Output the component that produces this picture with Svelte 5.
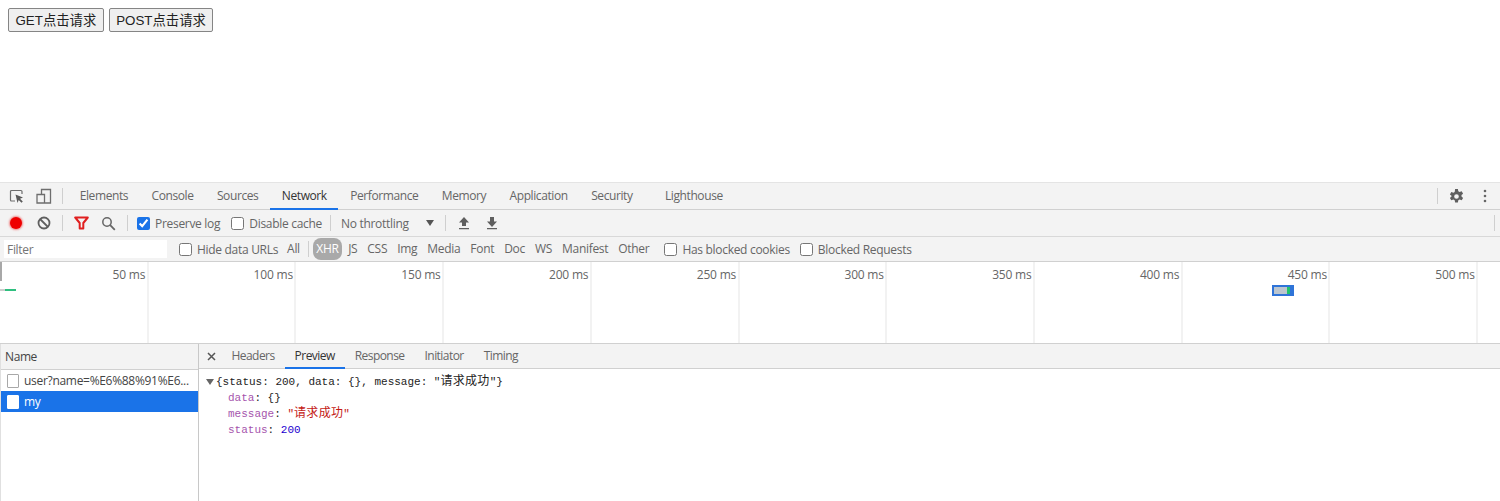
<script lang="ts">
	const tabs = ['Elements', 'Console', 'Sources', 'Network', 'Performance', 'Memory', 'Application', 'Security', 'Lighthouse'];
	const types = ['XHR', 'JS', 'CSS', 'Img', 'Media', 'Font', 'Doc', 'WS', 'Manifest', 'Other'];
	const ticks = [50, 100, 150, 200, 250, 300, 350, 400, 450, 500];
	const detailTabs = ['Headers', 'Preview', 'Response', 'Initiator', 'Timing'];

	let preserveLog = $state(true);
	let selected = $state('my');
</script>

<div class="page">
	<button class="page-btn">GET点击请求</button>
	<button class="page-btn">POST点击请求</button>
</div>

<div class="devtools">
	<div class="tabbar">
		<div class="tool-icons">
			<svg width="16" height="16" viewBox="0 0 16 16" fill="none">
				<path d="M6 13H2.500A1 1 0 0 1 1.500 12V3.500a1 1 0 0 1 1-1H12a1 1 0 0 1 1 1V6" stroke="#6e6e6e" stroke-width="1.200"/>
				<path d="M6.500 6.500l7.500 3-3 1.200 2.800 2.800-1.300 1.300-2.800-2.800-1.200 3z" fill="#5a5a5a"/>
			</svg>
			<svg width="16" height="16" viewBox="0 0 16 16" fill="none">
				<path d="M5.500 6V1.500h9v13.500H8.500M1 6.500h7.500V15H1z" stroke="#6e6e6e" stroke-width="1.300"/>
			</svg>
		</div>
		<span class="vsep tab-sep"></span>
		<div class="tabs">
			{#each tabs as tab}
				<span class="tab" class:active={tab === 'Network'} class:last={tab === 'Lighthouse'}>{tab}</span>
			{/each}
		</div>
		<div class="tab-right">
			<span class="vsep"></span>
			<svg class="gear" width="17" height="17" viewBox="0 0 16 16">
				<path fill-rule="evenodd" fill="#5f5f5f" d="M6.700 1h2.600l.4 2 1.200.7 2-.7 1.300 2.300-1.500 1.300v1.400l1.500 1.300-1.300 2.300-2-.7-1.200.7-.4 2H6.700l-.4-2-1.200-.7-2 .7-1.300-2.300 1.500-1.300V7.300L1.800 6 3.100 3.700l2 .7 1.200-.7zM8 5.800a2.200 2.200 0 1 0 0 4.400 2.200 2.200 0 0 0 0-4.400z"/>
			</svg>
			<svg class="dots" width="4" height="14" viewBox="0 0 4 14">
				<circle cx="2" cy="2" r="1.300" fill="#666"/>
				<circle cx="2" cy="7" r="1.300" fill="#666"/>
				<circle cx="2" cy="12" r="1.300" fill="#666"/>
			</svg>
		</div>
	</div>

	<div class="toolbar">
		<span class="record"></span>
		<svg class="clear" width="14" height="14" viewBox="0 0 14 14" fill="none">
			<circle cx="7" cy="7" r="5.500" stroke="#5f5f5f" stroke-width="1.800"/>
			<path d="M3 3l8 8" stroke="#5f5f5f" stroke-width="1.800"/>
		</svg>
		<span class="vsep s1"></span>
		<svg class="funnel" width="15" height="14" viewBox="0 0 15 14" fill="none">
			<path d="M1.200 1.500h12.600L9.300 7v5.500H5.700V7z" stroke="#e01f1f" stroke-width="2" stroke-linejoin="round"/>
		</svg>
		<svg class="search" width="15" height="15" viewBox="0 0 15 15" fill="none">
			<circle cx="6" cy="6" r="4.200" stroke="#666" stroke-width="1.500"/>
			<path d="M9.200 9.200l4.600 4.600" stroke="#666" stroke-width="1.800"/>
		</svg>
		<span class="vsep s2"></span>
		<label class="check first"><input type="checkbox" bind:checked={preserveLog} />Preserve log</label>
		<label class="check second"><input type="checkbox" />Disable cache</label>
		<span class="vsep s3"></span>
		<span class="throttle">No throttling</span>
		<span class="caret"></span>
		<span class="vsep s4"></span>
		<svg class="arrow" width="12" height="14" viewBox="0 0 12 14">
			<path d="M6 1l5 5.500H8V10H4V6.500H1zM1 12h10v1.300H1z" fill="#5f5f5f"/>
		</svg>
		<svg class="arrow a2" width="12" height="14" viewBox="0 0 12 14">
			<path d="M4 1h4v4.500h3L6 11 1 5.500h3zM1 12h10v1.300H1z" fill="#5f5f5f"/>
		</svg>
		<span class="vsep end"></span>
	</div>

	<div class="filterbar">
		<div class="filter-input">Filter</div>
		<label class="check hide"><input type="checkbox" />Hide data URLs</label>
		<span class="type all">All</span>
		<span class="vsep s5"></span>
		{#each types as t}
			<span class="type" class:on={t === 'XHR'}>{t}</span>
		{/each}
		<label class="check blocked"><input type="checkbox" />Has blocked cookies</label>
		<label class="check requests"><input type="checkbox" />Blocked Requests</label>
	</div>

	<div class="overview">
		{#each ticks as tick}
			<div class="tick">{tick} ms</div>
		{/each}
		<span class="handle"></span>
		<span class="bar-a"></span>
		<span class="bar-b"><span class="bar-b-wait"></span><span class="bar-b-recv"></span></span>
	</div>

	<div class="split">
		<div class="list">
			<div class="list-head">Name</div>
			<button class="row" class:sel={selected === 'user'} onclick={() => (selected = 'user')}>
				<span class="file"></span><span class="row-name">user?name=%E6%88%91%E6...</span>
			</button>
			<button class="row" class:sel={selected === 'my'} onclick={() => (selected = 'my')}>
				<span class="file"></span><span class="row-name">my</span>
			</button>
		</div>
		<div class="detail">
			<div class="detail-head">
				<svg class="close" width="9" height="9" viewBox="0 0 9 9">
					<path d="M1 1l7 7M8 1L1 8" stroke="#555" stroke-width="1.500"/>
				</svg>
				{#each detailTabs as tab}
					<span class="tab dtab" class:active={tab === 'Preview'}>{tab}</span>
				{/each}
			</div>
			<div class="json">
				<div class="json-root"><span class="tri"></span><span>{'{'}status: 200, data: {'{}'}, message: "<span class="cjk">请求成功</span>"{'}'}</span></div>
				<div class="prop"><span class="key">data</span>: {'{}'}</div>
				<div class="prop"><span class="key">message</span>: <span class="str">"<span class="cjk">请求成功</span>"</span></div>
				<div class="prop"><span class="key">status</span>: <span class="num">200</span></div>
			</div>
		</div>
	</div>
</div>

<style>
	:global(body) {
		background: #fff;
		overflow: hidden;
	}

	.page {
		height: 182px;
		box-sizing: border-box;
		padding: 8px;
		display: flex;
		align-items: flex-start;
		gap: 5px;
	}

	.page-btn {
		height: 24px;
		padding: 0 6.5px 2px;
		font: 13.33px "Liberation Sans", "Noto Sans CJK SC", sans-serif;
		color: #222;
		background: #efefef;
		border: 1px solid #858585;
		border-radius: 2px;
	}

	.devtools {
		font: 12px "Open Sans", "Noto Sans CJK SC", sans-serif;
		color: #666;
		border-top: 1px solid #e4e4e4;
		height: 318px;
		display: flex;
		flex-direction: column;
		letter-spacing: -0.4px;
	}

	.vsep {
		width: 1px;
		height: 16px;
		background: #cfcfcf;
		flex-shrink: 0;
	}

	.tabbar {
		height: 26px;
		flex-shrink: 0;
		display: flex;
		align-items: center;
		background: #f3f3f3;
		border-bottom: 1px solid #d0d0d0;
	}

	.tool-icons {
		display: flex;
		gap: 11px;
		padding-left: 9px;
	}

	.tab-sep {
		margin-left: 10px;
	}

	.tabs {
		display: flex;
		align-self: stretch;
		margin-left: 5px;
	}

	.tab {
		display: flex;
		align-items: center;
		padding: 0 11.7px;
		border-bottom: 2px solid transparent;
		margin-bottom: -1px;
	}

	.tab.active {
		color: #333;
		border-bottom-color: #1a73e8;
	}

	.tab.last {
		margin-left: 9px;
	}

	.tab-right {
		margin-left: auto;
		display: flex;
		align-items: center;
		padding-right: 13px;
	}

	.gear {
		margin-left: 10px;
	}

	.dots {
		margin-left: 18px;
	}

	.toolbar {
		height: 26px;
		flex-shrink: 0;
		display: flex;
		align-items: center;
		background: #f3f3f3;
		border-bottom: 1px solid #d8d8d8;
		letter-spacing: -0.3px;
	}

	.record {
		width: 12px;
		height: 12px;
		margin-left: 10px;
		border-radius: 50%;
		background: #ee0000;
		box-shadow: 0 0 2px 1px rgba(238, 0, 0, 0.45);
	}

	.clear {
		margin-left: 15px;
	}

	.s1 {
		margin-left: 11px;
	}

	.funnel {
		margin-left: 11px;
	}

	.search {
		margin-left: 12px;
	}

	.s2 {
		margin-left: 11px;
	}

	.check {
		display: flex;
		align-items: center;
		white-space: nowrap;
	}

	.check input {
		width: 13px;
		height: 13px;
		margin: 0 5px 0 0;
		accent-color: #1a73e8;
	}

	.first {
		margin-left: 9px;
	}

	.second {
		margin-left: 11px;
	}

	.s3 {
		margin-left: 8px;
	}

	.throttle {
		margin-left: 10px;
	}

	.caret {
		width: 0;
		height: 0;
		margin-left: 17px;
		border-left: 4px solid transparent;
		border-right: 4px solid transparent;
		border-top: 6px solid #555;
	}

	.s4 {
		margin-left: 11px;
	}

	.arrow {
		margin-left: 12px;
	}

	.a2 {
		margin-left: 16px;
	}

	.end {
		margin-left: auto;
		margin-right: 5px;
	}

	.filterbar {
		height: 24px;
		flex-shrink: 0;
		display: flex;
		align-items: center;
		background: #f3f3f3;
		border-bottom: 1px solid #d0d0d0;
		letter-spacing: -0.3px;
	}

	.filter-input {
		width: 160px;
		height: 18px;
		line-height: 19px;
		margin-left: 4px;
		padding-left: 3px;
		background: #fff;
		color: #757575;
		box-sizing: content-box;
	}

	.hide {
		margin-left: 12px;
	}

	.type {
		padding: 0 5px;
		height: 22px;
		line-height: 22px;
		flex-shrink: 0;
	}

	.type.all {
		margin-left: 4px;
	}

	.type.on {
		color: #fff;
		background: #a9a9a9;
		border-radius: 8px;
		padding: 0 3.5px;
		margin-right: 1px;
	}

	.s5 {
		margin: 0 4px 0 3px;
	}

	.blocked {
		margin-left: 10px;
	}

	.requests {
		margin-left: 10px;
	}

	.overview {
		position: relative;
		height: 81px;
		flex-shrink: 0;
		display: grid;
		grid-template-columns: repeat(10, 147.73px);
		background: #fff;
		border-bottom: 1px solid #d0d0d0;
	}

	.tick {
		box-sizing: border-box;
		border-right: 1px solid #e6e6e6;
		padding: 4px 2px 0 0;
		text-align: right;
		letter-spacing: -0.2px;
		transform: translateX(0.5px);
	}

	.handle {
		position: absolute;
		left: 0;
		top: 0;
		width: 2px;
		height: 19px;
		background: #a8a8a8;
	}

	.bar-a {
		position: absolute;
		left: 0;
		top: 27px;
		width: 16px;
		height: 2px;
		background: linear-gradient(to right, #ccc 30%, #2fbf7f 30%);
	}

	.bar-b {
		position: absolute;
		left: 1272px;
		top: 23px;
		width: 22px;
		height: 11px;
		box-sizing: border-box;
		border: 2px solid #2f74d8;
		background: #2f74d8;
		display: flex;
	}

	.bar-b-wait {
		width: 13px;
		background: #bcc6cf;
	}

	.bar-b-recv {
		width: 3px;
		background: #1fc46e;
	}

	.split {
		flex: 1;
		display: flex;
		min-height: 0;
	}

	.list {
		width: 197px;
		flex-shrink: 0;
		border-right: 1px solid #c8c8c8;
		border-left: 1px solid #e0e0e0;
	}

	.list-head {
		height: 25px;
		line-height: 26px;
		padding-left: 4px;
		background: #f3f3f3;
		border-bottom: 1px solid #d0d0d0;
		color: #444;
	}

	.row {
		display: flex;
		align-items: center;
		width: 100%;
		height: 21px;
		padding: 0 0 0 6px;
		border: 0;
		background: #fff;
		font: inherit;
		letter-spacing: -0.3px;
		color: #444;
		text-align: left;
	}

	.row.sel {
		background: #1a73e8;
		color: #fff;
	}

	.file {
		width: 12px;
		height: 14px;
		box-sizing: border-box;
		flex-shrink: 0;
		margin-right: 5px;
		background: #fff;
		border: 1px solid #a8a8a8;
		border-radius: 1px;
	}

	.row.sel .file {
		border-color: #fff;
	}

	.row-name {
		white-space: nowrap;
	}

	.detail {
		flex: 1;
		min-width: 0;
	}

	.detail-head {
		height: 24px;
		display: flex;
		align-items: stretch;
		background: #f3f3f3;
		border-bottom: 1px solid #d0d0d0;
	}

	.close {
		align-self: center;
		margin: 0 5.5px 0 8px;
		flex-shrink: 0;
	}

	.dtab {
		padding: 0 10px;
		letter-spacing: -0.55px;
	}

	.json {
		padding: 5px 0 0 7px;
		font: 11px/16px "Liberation Mono", "Noto Sans CJK SC", monospace;
		letter-spacing: 0;
		color: #222;
	}

	.cjk {
		font-size: 12px;
		letter-spacing: 0.3px;
	}

	.json-root {
		display: flex;
		align-items: center;
		white-space: pre;
	}

	.tri {
		width: 0;
		height: 0;
		margin-right: 2px;
		border-left: 4px solid transparent;
		border-right: 4px solid transparent;
		border-top: 6px solid #666;
	}

	.prop {
		padding-left: 22px;
		white-space: pre;
	}

	.key {
		color: #881391;
		opacity: 0.75;
	}

	.str {
		color: #c41a16;
	}

	.num {
		color: #1c00cf;
	}
</style>
